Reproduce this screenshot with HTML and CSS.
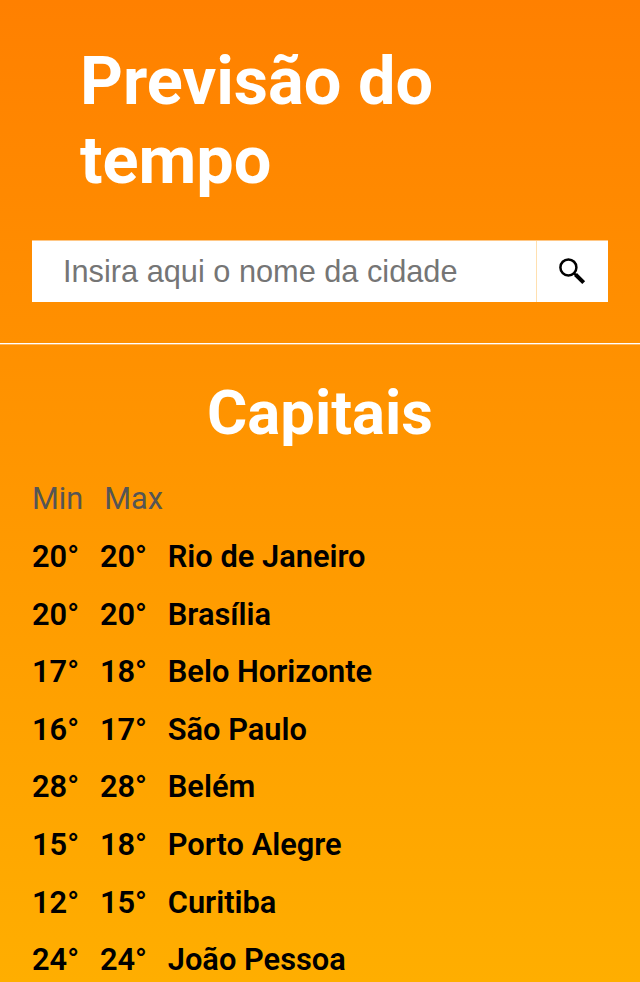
FILE: index.html
```html
<!DOCTYPE html>
<html lang="pt-BR">
<head>
<meta charset="utf-8">
<title>Previsão do tempo</title>
<link rel="stylesheet" href="styles.css">
</head>
<body>
<header class="header">
<h1 class="title">Previsão do tempo</h1>
<form class="search">
<input class="search-input" type="text" placeholder="Insira aqui o nome da cidade">
<button class="search-button" type="button" aria-label="Buscar">
<svg class="search-icon" viewBox="0 0 28 28"><circle cx="10.4" cy="10.4" r="8" fill="none" stroke="#000" stroke-width="2.5"/><path d="M15.8 16l3 3" stroke="#000" stroke-width="2.4"/><path d="M17.5 17.5l8.2 8.2" stroke="#000" stroke-width="4"/></svg>
</button>
</form>
</header>
<main class="capitals">
<h2 class="subtitle">Capitais</h2>
<div class="labels"><span>Min</span><span>Max</span></div>
<ul class="list">
<li class="row"><span class="temp">20°</span><span class="temp">20°</span><span>Rio de Janeiro</span></li>
<li class="row"><span class="temp">20°</span><span class="temp">20°</span><span>Brasília</span></li>
<li class="row"><span class="temp">17°</span><span class="temp">18°</span><span>Belo Horizonte</span></li>
<li class="row"><span class="temp">16°</span><span class="temp">17°</span><span>São Paulo</span></li>
<li class="row"><span class="temp">28°</span><span class="temp">28°</span><span>Belém</span></li>
<li class="row"><span class="temp">15°</span><span class="temp">18°</span><span>Porto Alegre</span></li>
<li class="row"><span class="temp">12°</span><span class="temp">15°</span><span>Curitiba</span></li>
<li class="row"><span class="temp">24°</span><span class="temp">24°</span><span>João Pessoa</span></li>
</ul>
</main>
</body>
</html>
```
FILE: styles.css
```css
* { box-sizing: border-box; margin: 0; padding: 0; }
body {
  height: 982px;
  overflow: hidden;
  font-family: Roboto, "Liberation Sans", sans-serif;
  background: linear-gradient(to bottom, #ff8000, #ffae00);
}
.header { height: 344px; padding: 42px 32px 0; border-bottom: 1px solid #fff; }
.title { margin: 0 48px 40px; font-size: 66.7px; line-height: 79px; font-weight: 700; color: #fff; }
.search { display: flex; height: 62px; border-top: 1px solid #ffc785; }
.search-input { flex: 1; min-width: 0; padding: 0 31px; border: 0; background: #fff; font: 30.72px "Liberation Sans", Arial, sans-serif; }
.search-input::placeholder { color: #757575; }
.search-button { display: flex; align-items: center; justify-content: center; width: 72px; padding: 0 2px 1px 0; border: 0; border-left: 1px solid #ffe0b0; background: #fff; }
.search-icon { width: 28px; height: 28px; }
.capitals { padding: 32px 32px 0; border-top: 1px solid #ffb65c; }
.subtitle { font-size: 61.6px; line-height: 72px; text-align: center; color: #fff; }
.labels { display: flex; gap: 21px; margin-top: 31px; font-size: 30.72px; line-height: 38px; color: #555; }
.list { margin-top: 10px; list-style: none; }
.row { display: flex; gap: 21px; font-size: 30.8px; line-height: 57.6px; font-weight: 600; }
.temp { width: 46.9px; }
```
